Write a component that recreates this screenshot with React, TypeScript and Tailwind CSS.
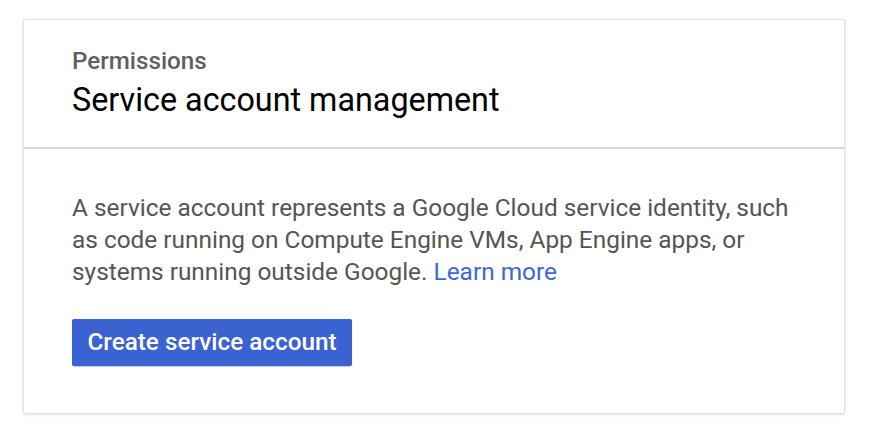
export default function App() {
  return (
    <div className="w-[870px] h-[438px] bg-white pt-[19px] pl-[23px]" style={{ fontFamily: "Roboto, 'Noto Sans', sans-serif" }}>
      <div className="w-[822px] h-[395px] bg-white border border-[#e2e2e2] rounded-[2px] shadow-[0_1px_3px_rgba(0,0,0,0.12)]">
        <div className="h-[129px] pl-[48px] pt-[26px] border-b-2 border-[#d6d6d6]">
          <div className="text-[24.2px] leading-[30px] font-medium text-[#5f5f5f]">Permissions</div>
          <div className="text-[32.3px] leading-[40px] text-black mt-[4px]">Service account management</div>
        </div>
        <div className="pl-[48px] pt-[43px]">
          <p className="text-[24.4px] leading-[32px] text-[#555555] w-[730px]">
            A service account represents a Google Cloud service identity, such as code running on Compute Engine VMs, App Engine apps, or systems running outside Google.{" "}
            <a className="text-[#3b68d9]">Learn more</a>
          </p>
          <button className="mt-[31px] w-[280px] h-[47px] bg-[#3a62d0] rounded-[2px] text-white text-[24.3px] font-medium shadow-[0_1px_1px_rgba(0,0,0,0.2)]">
            Create service account
          </button>
        </div>
      </div>
    </div>
  );
}
